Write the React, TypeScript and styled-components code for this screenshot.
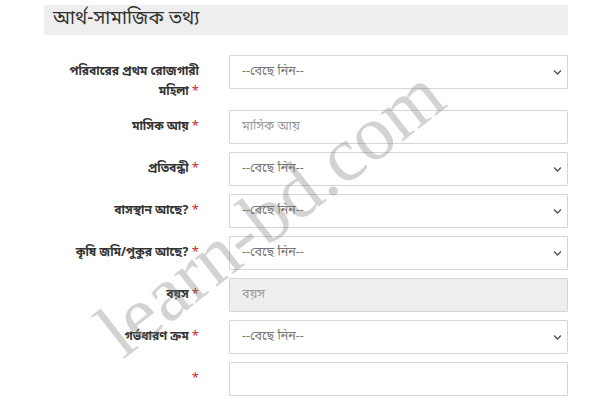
import * as React from 'react';
import styled, { createGlobalStyle } from 'styled-components';
import { FaChevronDown } from 'react-icons/fa';

const bangla = `'Noto Sans Bengali', 'Noto Serif Bengali', 'Lohit Bengali', 'Noto Sans', 'DejaVu Sans', sans-serif`;

type Field = {
    label: React.ReactNode;
    kind: 'select' | 'input' | 'disabled';
    placeholder?: string;
};

const fields: Field[] = [
    {
        label: (
            <>
                পরিবারের প্রথম রোজগারী
                <br />
                মহিলা
            </>
        ),
        kind: 'select',
    },
    { label: 'মাসিক আয়', kind: 'input', placeholder: 'মাসিক আয়' },
    { label: 'প্রতিবন্ধী', kind: 'select' },
    { label: 'বাসস্থান আছে?', kind: 'select' },
    { label: 'কৃষি জমি/পুকুর আছে?', kind: 'select' },
    { label: 'বয়স', kind: 'disabled', placeholder: 'বয়স' },
    { label: 'গর্ভধারণ ক্রম', kind: 'select' },
    { label: '', kind: 'input' },
];

const App = () => (
    <>
        <GlobalStyle />
        <Page>
            <SectionHeader>আর্থ-সামাজিক তথ্য</SectionHeader>
            <Form>
                {fields.map((f, i) => (
                    <FieldRow key={i}>
                        <Label>
                            {f.label} <Required>*</Required>
                        </Label>
                        {f.kind === 'select' ? (
                            <SelectWrap>
                                <Select defaultValue="">
                                    <option value="">--বেছে নিন--</option>
                                    <option value="1">হ্যাঁ</option>
                                    <option value="0">না</option>
                                </Select>
                                <Chevron />
                            </SelectWrap>
                        ) : (
                            <Input
                                placeholder={f.placeholder}
                                disabled={f.kind === 'disabled'}
                            />
                        )}
                    </FieldRow>
                ))}
            </Form>
            <Watermark>learn-bd.com</Watermark>
        </Page>
    </>
);

const GlobalStyle = createGlobalStyle`
    body {
        margin: 0;
        background: #fff;
        font-family: ${bangla};
        color: #333;
    }
`;

const Page = styled.div`
    position: relative;
    width: 524px;
    padding: 5px 0 0 44px;
    overflow: hidden;
    height: 395px;
`;

const SectionHeader = styled.h3`
    margin: 0;
    height: 30px;
    line-height: 30px;
    padding: 0 9px;
    background: #eeeeee;
    font-size: 19px;
    font-weight: normal;
    color: #333;
`;

const Form = styled.div`
    display: flex;
    flex-direction: column;
    gap: 8px;
    margin-top: 20px;
`;

const FieldRow = styled.div`
    display: grid;
    grid-template-columns: 155px 339px;
    column-gap: 30px;
    align-items: start;
`;

const Label = styled.label`
    text-align: right;
    font-size: 12px;
    font-weight: bold;
    line-height: 20px;
    padding-top: 7px;
    color: #333;
`;

const Required = styled.span`
    color: #d0243a;
    font-weight: normal;
    font-size: 13px;
`;

const controlBase = `
    box-sizing: border-box;
    width: 100%;
    height: 34px;
    padding: 6px 12px;
    border: 1px solid #d6d6d6;
    border-radius: 1px;
    font-family: ${bangla};
    font-size: 12.5px;
    outline: none;
`;

const Input = styled.input`
    ${controlBase}
    color: #555;
    background: #fff;
    &::placeholder {
        color: #9a9a9a;
    }
    &:disabled {
        background: #eeeeee;
    }
`;

const SelectWrap = styled.div`
    position: relative;
`;

const Select = styled.select`
    ${controlBase}
    appearance: none;
    background: #fff;
    color: #777;
`;

const Chevron = styled(FaChevronDown)`
    position: absolute;
    right: 6px;
    top: 13px;
    width: 9px;
    height: 9px;
    color: #555;
    pointer-events: none;
`;

const Watermark = styled.div`
    position: absolute;
    left: 270px;
    top: 212px;
    transform: translate(-50%, -50%) rotate(-38deg);
    font-family: 'Liberation Serif', serif;
    font-size: 78px;
    color: rgba(120, 120, 120, 0.33);
    white-space: nowrap;
    pointer-events: none;
`;

export default App;
